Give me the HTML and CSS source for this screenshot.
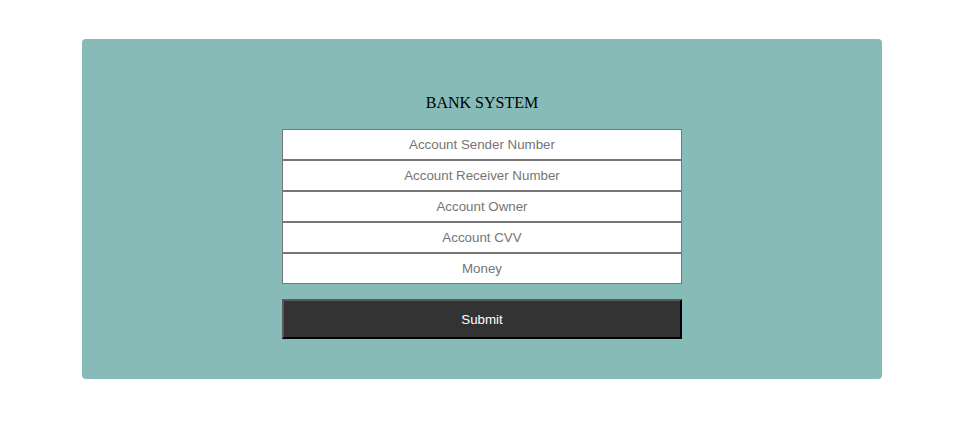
FILE: index.html
```html
<!DOCTYPE html>
<html>
<head>
<meta charset="utf-8">
<link rel="stylesheet" href="styles.css">
</head>
<body>
<div class="page">
  <form class="card">
    <div class="title">BANK SYSTEM</div>
    <div class="fields">
      <input class="field" type="text" placeholder="Account Sender Number">
      <input class="field" type="text" placeholder="Account Receiver Number">
      <input class="field" type="text" placeholder="Account Owner">
      <input class="field" type="text" placeholder="Account CVV">
      <input class="field" type="text" placeholder="Money">
    </div>
    <button class="submit" type="button">Submit</button>
  </form>
</div>
</body>
</html>
```

FILE: styles.css
```css
html, body {
  margin: 0;
  padding: 0;
  background: #ffffff;
}
.page {
  padding: 39px 0 0 82px;
}
.card {
  box-sizing: border-box;
  width: 800px;
  height: 340px;
  margin: 0;
  background: #86bbb8;
  border-radius: 4px;
  padding-top: 55px;
  display: flex;
  flex-direction: column;
  align-items: center;
}
.title {
  font-family: "Liberation Serif", "Times New Roman", serif;
  font-size: 16px;
  line-height: 18px;
  height: 18px;
  color: #000;
  margin-bottom: 17px;
}
.fields {
  display: flex;
  flex-direction: column;
  width: 400px;
}
.field {
  box-sizing: border-box;
  width: 400px;
  height: 31px;
  margin: 0;
  padding: 0 4px;
  border: 1px solid #767676;
  background: #fff;
  font-family: "Liberation Sans", Arial, sans-serif;
  font-size: 13.333px;
  text-align: center;
  outline: none;
}
.field::placeholder {
  color: #757575;
}
.submit {
  box-sizing: border-box;
  width: 400px;
  height: 40px;
  margin-top: 15px;
  background: #333333;
  color: #ffffff;
  border-style: solid;
  border-width: 2px;
  border-color: #5a5a5a #000000 #000000 #5a5a5a;
  font-family: "Liberation Sans", Arial, sans-serif;
  font-size: 13.333px;
  padding: 0;
}
```
